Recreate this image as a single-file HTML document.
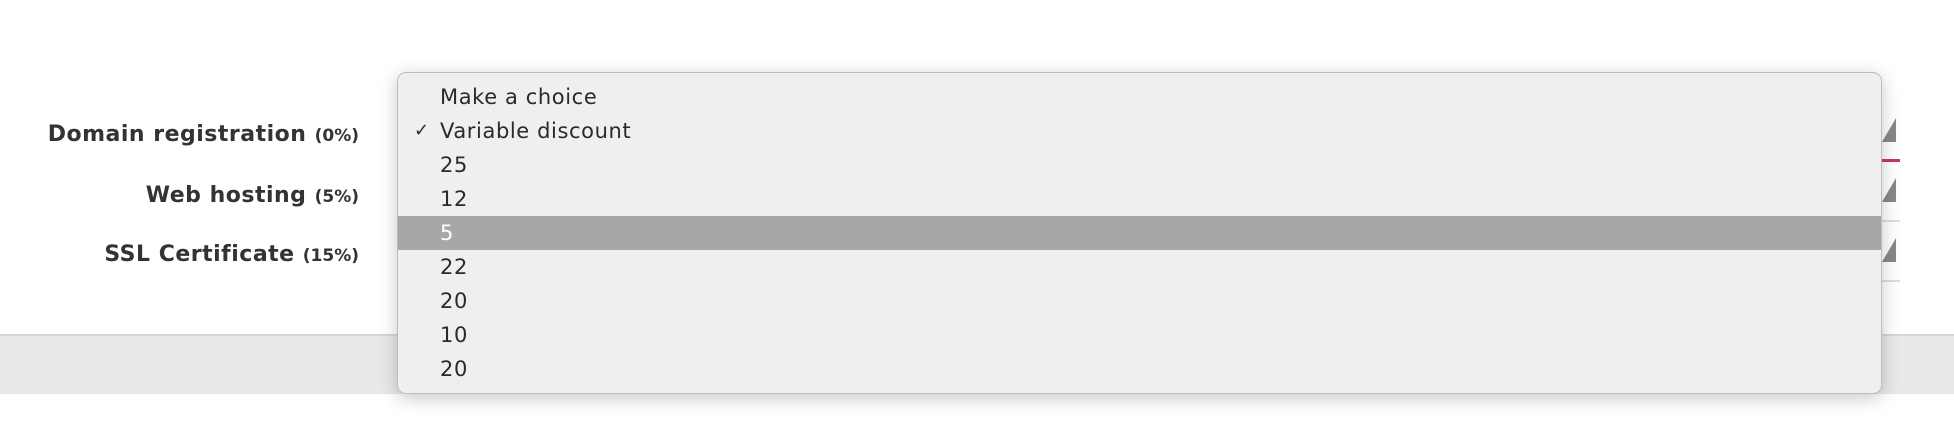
<!DOCTYPE html>
<html><head><style>
body{margin:0;width:1954px;height:446px;background:#fff;position:relative;overflow:hidden;font-family:"Liberation Sans",sans-serif}
.lbl{position:absolute;right:1595px;font-family:"DejaVu Sans",sans-serif;font-weight:bold;font-size:22px;color:#333;line-height:30px;white-space:nowrap;letter-spacing:0.5px}
.lbl small{font-size:17px;letter-spacing:0}
.band{position:absolute;left:0;top:334px;width:1954px;height:60px;background:#e8e8e8;border-top:2px solid #d6d6d6;box-sizing:border-box}
.tri{position:absolute;left:1882px;width:0;height:0;border-left:14px solid transparent;border-bottom:24px solid #888}
.ln{position:absolute;left:1882px;width:18px}
.dd{position:absolute;left:397px;top:72px;width:1485px;height:322px;background:#efefef;border:1px solid #bdbdbd;border-radius:9px;box-sizing:border-box;box-shadow:0 4px 18px rgba(0,0,0,.22);padding-top:7px;overflow:hidden}
.it{height:34px;line-height:34px;font-family:"DejaVu Sans",sans-serif;font-size:21px;letter-spacing:0.6px;color:#2a2a2a;padding-left:42px;position:relative}
.it.sel{background:#a7a7aa;color:#fff}
.ck{position:absolute;left:16px;font-size:18px}
</style></head><body>
<div class="lbl" style="top:120px">Domain registration <small>(0%)</small></div>
<div class="lbl" style="top:181px">Web hosting <small>(5%)</small></div>
<div class="lbl" style="top:240px">SSL Certificate <small>(15%)</small></div>
<div class="band"></div>
<div class="tri" style="top:118px"></div>
<div class="ln" style="top:159px;height:3px;background:#c8356e"></div>
<div class="tri" style="top:178px"></div>
<div class="ln" style="top:220px;height:2px;background:#ddd"></div>
<div class="tri" style="top:238px"></div>
<div class="ln" style="top:280px;height:2px;background:#ddd"></div>
<div class="dd">
<div class="it">Make a choice</div>
<div class="it"><span class="ck">✓</span>Variable discount</div>
<div class="it">25</div>
<div class="it">12</div>
<div class="it sel">5</div>
<div class="it">22</div>
<div class="it">20</div>
<div class="it">10</div>
<div class="it">20</div>
</div>
</body></html>
